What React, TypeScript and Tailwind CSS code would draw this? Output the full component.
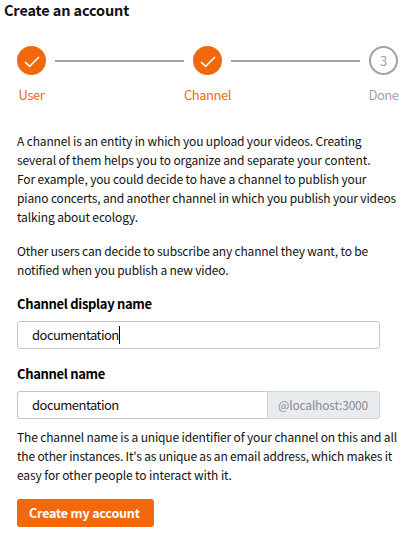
import React from "react";

function Check() {
  return (
    <svg className="mt-[3px]" width="16" height="12" viewBox="0 0 16 12" fill="none" stroke="white" strokeWidth="1.5">
      <path d="M1 6 L5.6 10.4 L15 1" />
    </svg>
  );
}

function Step({ label, done, children }: { label: string; done?: boolean; children: React.ReactNode }) {
  return (
    <div className={`flex w-[29px] shrink-0 flex-col items-center ${done ? "text-[#f2690d]" : "text-[#9ca3ac]"}`}>
      <div
        className={`flex h-[29px] w-[29px] items-center justify-center rounded-full text-[13px] leading-none ${
          done ? "bg-[#f2690d]" : "border-2 border-[#9ca3ac]"
        }`}
      >
        {children}
      </div>
      <div className="mt-[10px] whitespace-nowrap text-[13px] leading-[20px] tracking-[-0.45px]">{label}</div>
    </div>
  );
}

type Line = [text: string, tracking: string];

function Lines({ lines }: { lines: Line[] }) {
  return (
    <p className="whitespace-nowrap text-[12px] leading-[19px]">
      {lines.map(([text, tracking]) => (
        <span key={text} className={`block ${tracking}`}>{text}</span>
      ))}
    </p>
  );
}

export default function App() {
  return (
    <div className="h-[537px] w-[410px] overflow-hidden bg-white font-['Noto_Sans_CJK_SC','Noto_Sans',sans-serif] text-[#111]">
      <h1 className="pl-[4px] text-[14.5px] font-bold leading-[20px] tracking-[-0.14px]">Create an account</h1>
      <div className="mt-[26px] flex items-start pl-[17px] pr-[12px]">
        <Step label="User" done><Check /></Step>
        <div className="mx-[9px] mt-[14px] h-[2px] flex-1 bg-[#9ca3ac]" />
        <Step label="Channel" done><Check /></Step>
        <div className="mx-[9px] mt-[14px] h-[2px] flex-1 bg-[#9ca3ac]" />
        <Step label="Done">3</Step>
      </div>
      <main className="pl-[17px] pt-[26px]">
        <Lines
          lines={[
            ["A channel is an entity in which you upload your videos. Creating", "tracking-[-0.15px]"],
            ["several of them helps you to organize and separate your content.", "tracking-[-0.1px]"],
            ["For example, you could decide to have a channel to publish your", "tracking-[-0.13px]"],
            ["piano concerts, and another channel in which you publish your videos", "tracking-[-0.15px]"],
            ["talking about ecology.", "tracking-[-0.12px]"],
          ]}
        />
        <div className="h-[15px]" />
        <Lines
          lines={[
            ["Other users can decide to subscribe any channel they want, to be", "tracking-[-0.17px]"],
            ["notified when you publish a new video.", "tracking-[-0.16px]"],
          ]}
        />
        <div className="mt-[15px] text-[13px] font-bold leading-[20px] tracking-[-0.32px] text-black">Channel display name</div>
        <div className="mt-[7px] flex h-[28px] w-[363px] items-center rounded-[3px] border border-[#c6c6c6] pl-[14px] text-[13px] leading-[20px] tracking-[-0.53px]">
          <span>documentation</span>
          <span className="h-[18px] w-px bg-black" />
        </div>
        <div className="mt-[15px] text-[13px] font-bold leading-[20px] tracking-[-0.32px] text-black">Channel name</div>
        <div className="mt-[7px] flex h-[28px] w-[363px] text-[13px] leading-[20px] tracking-[-0.53px]">
          <div className="flex w-[250px] items-center rounded-l-[3px] border border-r-0 border-[#c6c6c6] pl-[14px]">documentation</div>
          <div className="flex flex-1 items-center rounded-r-[3px] border border-[#ced4da] bg-[#e9ecef] pl-[10px] text-[12px] tracking-[-0.18px] text-[#8b8b8b]">@localhost:3000</div>
        </div>
        <div className="h-[8px]" />
        <Lines
          lines={[
            ["The channel name is a unique identifier of your channel on this and all", "tracking-[-0.15px]"],
            ["the other instances. It's as unique as an email address, which makes it", "tracking-[-0.18px]"],
            ["easy for other people to interact with it.", "tracking-[-0.11px]"],
          ]}
        />
        <button className="mt-[15px] flex h-[28px] w-[137px] items-center rounded-[3px] bg-[#f2690d] pl-[12px] text-[12.5px] font-bold leading-[20px] tracking-[-0.18px] text-white">
          Create my account
        </button>
      </main>
    </div>
  );
}
